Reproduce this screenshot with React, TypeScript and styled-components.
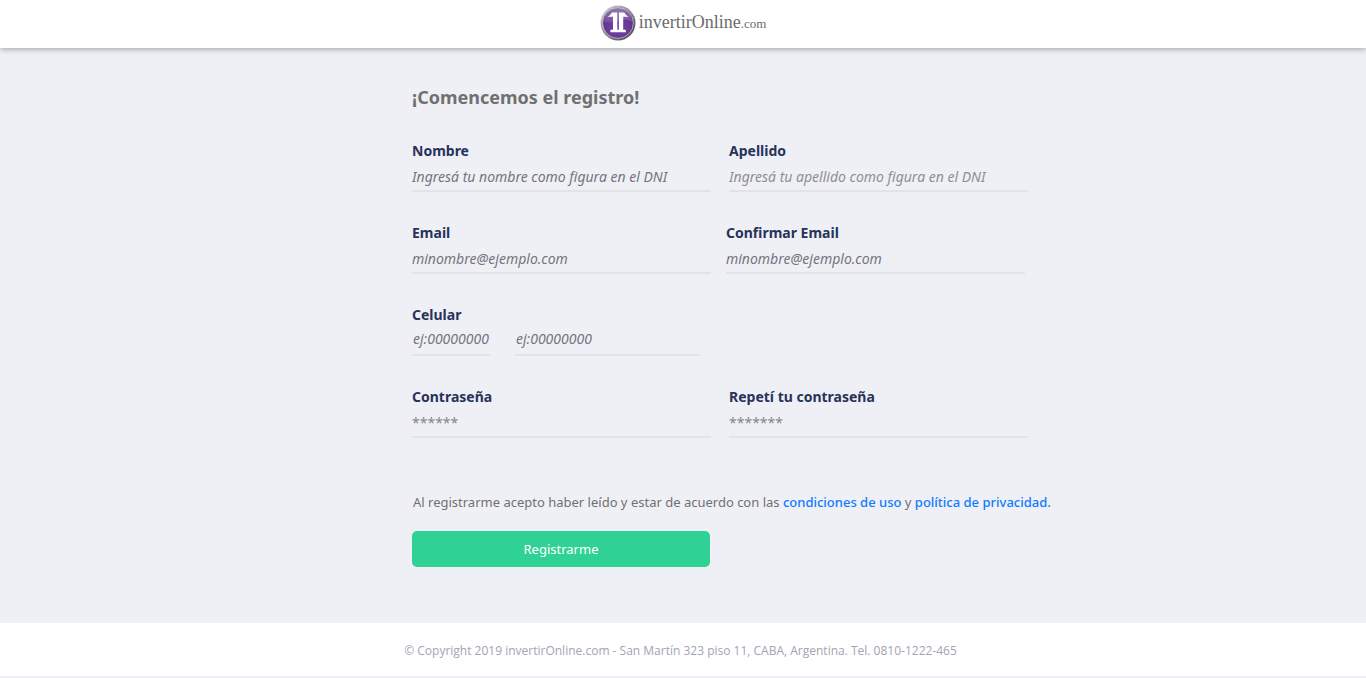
import React from "react";
import styled, { createGlobalStyle } from "styled-components";

const GlobalStyle = createGlobalStyle`
  * {
    box-sizing: border-box;
  }
  body {
    margin: 0;
    background: #eff0f6;
    font-family: "Noto Sans", "Open Sans", sans-serif;
  }
`;

const Page = styled.div`
  display: flex;
  flex-direction: column;
`;

const Header = styled.header`
  display: flex;
  justify-content: center;
  height: 48px;
  padding-top: 5px;
  background: #ffffff;
  box-shadow: 0 1px 6px rgba(0, 0, 0, 0.35);
`;

const Brand = styled.a`
  display: flex;
  gap: 3px;
  height: 36px;
  color: #6b6b6b;
  font-family: "Liberation Serif", serif;
  font-size: 18px;
  line-height: 34px;
  text-decoration: none;
`;

const BrandSuffix = styled.span`
  font-size: 13px;
`;

const Main = styled.main`
  width: 100%;
  max-width: 1140px;
  margin: 0 auto;
  padding: 37px 0 56px 299px;
`;

const Title = styled.h1`
  margin: 0 0 32px;
  color: #707070;
  font-size: 18px;
  line-height: 24px;
`;

const Form = styled.form`
  display: flex;
  flex-direction: column;
  align-items: flex-start;
`;

const Fields = styled.div`
  display: flex;
  flex-direction: column;
  gap: 31px;
  margin-bottom: 54px;
`;

const Row = styled.div<{ $gap: number }>`
  display: flex;
  gap: ${({ $gap }) => $gap}px;
`;

const FieldBox = styled.div`
  display: flex;
  flex-direction: column;
  width: 299px;
`;

const Label = styled.label`
  color: #27335a;
  font-size: 14px;
  font-weight: 700;
  line-height: 20px;
`;

const Input = styled.input<{ $width?: number; $tone?: string; $raised?: boolean }>`
  width: ${({ $width }) => ($width ? `${$width}px` : "100%")};
  height: 31px;
  padding: ${({ $raised }) => ($raised ? "0 0 3px 1px" : "1px 0 0")};
  border: 0;
  border-bottom: 2px solid #e2e3e8;
  border-radius: 1px;
  outline: 0;
  background: transparent;
  color: #27335a;
  font-family: inherit;
  font-size: 14px;

  &::placeholder {
    color: ${({ $tone }) => $tone || "#74747f"};
    font-style: ${({ type }) => (type === "password" ? "normal" : "italic")};
    opacity: 1;
  }
`;

const Terms = styled.p`
  margin: 0 0 19px;
  padding-left: 1px;
  color: #707070;
  font-size: 13px;
  line-height: 20px;
  white-space: nowrap;
`;

const TermsLink = styled.a`
  color: #0f7bff;
  font-weight: 500;
  text-decoration: none;
`;

const Submit = styled.button`
  width: 298px;
  height: 36px;
  border: 0;
  border-radius: 5px;
  background: #30d195;
  color: #ffffff;
  font-family: inherit;
  font-size: 13px;
  cursor: pointer;
`;

const Footer = styled.footer`
  height: 55px;
  padding: 18px 5px 0 0;
  border-bottom: 2px solid #f0f0f3;
  background: #ffffff;
  color: #a1a4b2;
  font-family: "Open Sans", sans-serif;
  font-size: 12px;
  line-height: 20px;
  text-align: center;
`;

function Logo() {
  return (
    <svg width="36" height="36" viewBox="0 0 36 36" aria-hidden="true">
      <defs>
        <linearGradient id="rim" x1="0" y1="0" x2="1" y2="1">
          <stop offset="0" stopColor="#d8d8da" />
          <stop offset="0.5" stopColor="#8e8c92" />
          <stop offset="1" stopColor="#39363d" />
        </linearGradient>
        <radialGradient id="ball" cx="0.5" cy="0.65" r="0.65">
          <stop offset="0" stopColor="#7443a3" />
          <stop offset="0.7" stopColor="#633592" />
          <stop offset="1" stopColor="#482366" />
        </radialGradient>
        <linearGradient id="shine" x1="0" y1="0" x2="0" y2="1">
          <stop offset="0" stopColor="#ffffff" stopOpacity="0.4" />
          <stop offset="1" stopColor="#ffffff" stopOpacity="0.08" />
        </linearGradient>
      </defs>
      <circle cx="18" cy="18" r="17.5" fill="url(#rim)" />
      <circle cx="18" cy="18" r="15.4" fill="url(#ball)" stroke="#d0cbd6" strokeWidth="0.7" />
      <path d="M3.500 17A14.500 14.500 0 0 1 32.500 17Q25 13 18 16T3.500 17Z" fill="url(#shine)" />
      <path
        d="M7.500 11.800Q10.500 10.500 12 7.500H17.300V24.800H18.900V7.500H24.200Q25.700 10.500 28.700 11.800H23.200V24.800H25.800V27.200H10.400V24.800H13V11.800Z"
        fill="#ffffff"
      />
    </svg>
  );
}

interface FieldProps {
  id: string;
  label: string;
  placeholder: string;
  type?: string;
  tone?: string;
}

function Field({ id, label, placeholder, type = "text", tone }: FieldProps) {
  return (
    <FieldBox>
      <Label htmlFor={id}>{label}</Label>
      <Input id={id} type={type} placeholder={placeholder} $tone={tone} />
    </FieldBox>
  );
}

export default function App() {
  return (
    <Page>
      <GlobalStyle />
      <Header>
        <Brand href="#">
          <Logo />
          <span>
            invertirOnline<BrandSuffix>.com</BrandSuffix>
          </span>
        </Brand>
      </Header>
      <Main>
        <Title>¡Comencemos el registro!</Title>
        <Form onSubmit={(event) => event.preventDefault()}>
          <Fields>
            <Row $gap={18}>
              <Field id="nombre" label="Nombre" placeholder="Ingresá tu nombre como figura en el DNI" />
              <Field
                id="apellido"
                label="Apellido"
                placeholder="Ingresá tu apellido como figura en el DNI"
                tone="#8e8e92"
              />
            </Row>
            <Row $gap={15}>
              <Field id="email" type="email" label="Email" placeholder="minombre@ejemplo.com" />
              <Field id="email2" type="email" label="Confirmar Email" placeholder="minombre@ejemplo.com" />
            </Row>
            <FieldBox>
              <Label htmlFor="area">Celular</Label>
              <Row $gap={25}>
                <Input id="area" type="tel" placeholder="ej:00000000" $width={78} $raised />
                <Input type="tel" aria-label="Número de celular" placeholder="ej:00000000" $width={185} $raised />
              </Row>
            </FieldBox>
            <Row $gap={18}>
              <Field id="clave" type="password" label="Contraseña" placeholder="******" tone="#85858e" />
              <Field id="clave2" type="password" label="Repetí tu contraseña" placeholder="*******" tone="#85858e" />
            </Row>
          </Fields>
          <Terms>
            Al registrarme acepto haber leído y estar de acuerdo con las{" "}
            <TermsLink href="#">condiciones de uso</TermsLink> y{" "}
            <TermsLink href="#">política de privacidad.</TermsLink>
          </Terms>
          <Submit type="submit">Registrarme</Submit>
        </Form>
      </Main>
      <Footer>© Copyright 2019 invertirOnline.com - San Martín 323 piso 11, CABA, Argentina. Tel. 0810-1222-465</Footer>
    </Page>
  );
}
